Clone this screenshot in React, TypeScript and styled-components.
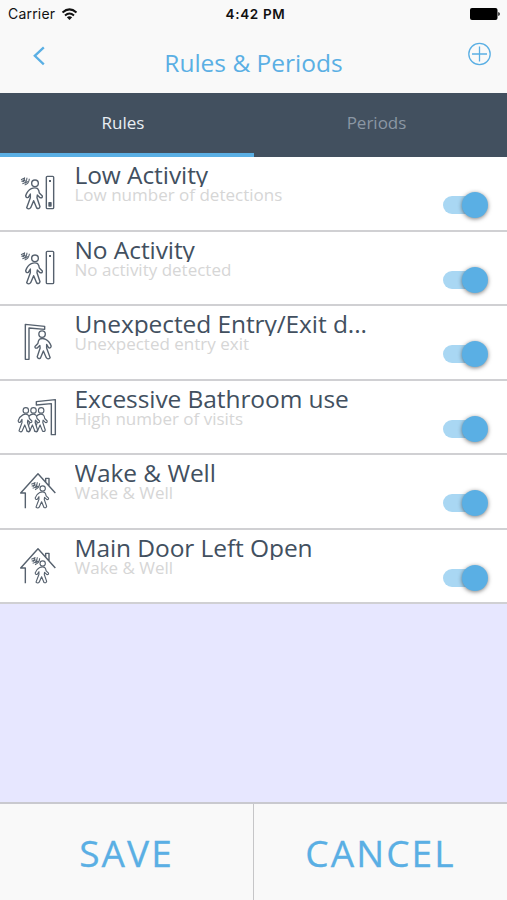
import React, { useState } from "react";
import styled, { createGlobalStyle } from "styled-components";

const BLUE = "#5aafe4";
const SLATE = "#42505f";

const GlobalStyle = createGlobalStyle`
  * { box-sizing: border-box; }
  body { margin: 0; font-family: "Open Sans", "Noto Sans", sans-serif; }
  button { border: 0; padding: 0; background: none; font: inherit; cursor: pointer; }
`;

const Screen = styled.div`
  width: 507px;
  height: 900px;
  display: flex;
  flex-direction: column;
  overflow: hidden;
  background: #e7e7ff;
`;

const StatusBar = styled.div`
  height: 28px;
  flex: none;
  display: grid;
  grid-template-columns: 1fr auto 1fr;
  align-items: center;
  padding: 0 7px 0 8px;
  background: #f9f9f9;
  color: #111;
  font-family: Inter, "Liberation Sans", sans-serif;
  font-size: 14px;
  line-height: 28px;
`;

const Carrier = styled.div`
  display: flex;
  align-items: center;
  gap: 6px;
  letter-spacing: 0.2px;
`;

const Clock = styled.div`
  padding-left: 3px;
  font-size: 13.5px;
  font-weight: 600;
  letter-spacing: 0.65px;
`;

const Battery = styled.svg`
  justify-self: end;
`;

const Header = styled.header`
  height: 65px;
  flex: none;
  display: grid;
  grid-template-columns: 80px 1fr 80px;
  background: #f9f9f9;
  color: ${BLUE};
`;

const IconButton = styled.button<{ $end?: boolean }>`
  display: flex;
  align-items: flex-start;
  justify-content: ${(p) => (p.$end ? "flex-end" : "flex-start")};
  padding: ${(p) => (p.$end ? "14px 15px 0 0" : "17px 0 0 31px")};
  color: inherit;
`;

const Heading = styled.h1`
  margin: 0;
  padding-top: 17px;
  text-align: center;
  font-size: 24.5px;
  line-height: 36px;
  font-weight: 400;
  white-space: nowrap;
`;

const Tabs = styled.nav`
  height: 64px;
  flex: none;
  display: grid;
  grid-template-columns: 254px 1fr;
  background: ${SLATE};
`;

const Tab = styled.button<{ $active: boolean }>`
  padding: 0 8px 1px 0;
  border-bottom: 4px solid ${(p) => (p.$active ? BLUE : SLATE)};
  color: ${(p) => (p.$active ? "#e9eef3" : "#8b97a4")};
  font-size: 17px;
`;

const List = styled.div`
  flex: 1;
`;

const Row = styled.div`
  height: 74.5px;
  display: grid;
  grid-template-columns: 74.5px 1fr 64px;
  border-bottom: 2px solid #d0d0d3;
  background: #fff;
`;

const RowIcon = styled.svg`
  margin: 8px 0 0 10px;
  fill: none;
  stroke: #56616e;
  stroke-width: 4.2;
  stroke-linejoin: round;
`;

const RowText = styled.div`
  min-width: 0;
`;

const Title = styled.div`
  height: 30px;
  overflow: hidden;
  color: ${SLATE};
  font-size: 24.5px;
  line-height: 35px;
  white-space: nowrap;
  letter-spacing: -0.08px;
`;

const Subtitle = styled.div`
  margin-top: -4px;
  color: #d6d6d6;
  font-size: 17px;
  line-height: 24px;
  white-space: nowrap;
`;

const Track = styled.button<{ $on: boolean }>`
  width: 41px;
  height: 18px;
  margin-top: 39px;
  display: flex;
  align-items: center;
  justify-content: ${(p) => (p.$on ? "flex-end" : "flex-start")};
  border-radius: 9px;
  background: ${(p) => (p.$on ? "#a9d7f3" : "#ccc")};
`;

const Knob = styled.span<{ $on: boolean }>`
  width: 26px;
  height: 26px;
  flex: none;
  margin-right: -4px;
  border-radius: 50%;
  background: ${(p) => (p.$on ? BLUE : "#f5f5f5")};
  box-shadow: 0 1px 4px rgba(0, 0, 0, 0.5);
`;

const Footer = styled.footer`
  height: 98px;
  flex: none;
  display: grid;
  grid-template-columns: 254px 1fr;
  border-top: 2px solid #c9c9cf;
  background: #f9f9f9;
`;

const Action = styled.button<{ $divided?: boolean }>`
  padding: ${(p) => (p.$divided ? "1px 0 0" : "1px 0 0")};
  border-right: ${(p) => (p.$divided ? "1.5px solid #c6c6c8" : "0")};
  color: ${BLUE};
  font-size: 37px;
  letter-spacing: 2.1px;
  -webkit-text-stroke: 0.3px ${BLUE};
`;

const Person = () => (
  <g fill="#fff">
    <path d="M64 71 Q75 66 83 71 Q87 75 88 84 L97 93 Q98 100 90 98 L82 90 L81 98 L90 125 Q88 133 80 129 L71 107 L62 128 Q57 135 50 128 L61 98 L61 87 L55 97 Q48 100 47 92 Q52 77 64 71 Z" />
    <circle cx="75" cy="55" r="10" />
  </g>
);

const Waves = () => (
  <path strokeWidth="3.2" d="M34 49 Q43 49 44 37 M37 56 Q50 54 51 38 M44 60 Q57 56 58 41 M33 44 L42 40 M38 51 L46 45 M45 55 L53 49" />
);

type IconKind = "low" | "none" | "entry" | "bathroom" | "house";

const drawings: Record<IconKind, React.ReactNode> = {
  low: (
    <>
      <Waves />
      <Person />
      <rect x="109" y="34" width="22" height="97" rx="3" />
      <path d="M117 48 H123" strokeWidth="6" />
      <rect x="117" y="113" width="6" height="10" fill="#4b5765" />
    </>
  ),
  none: (
    <>
      <Waves />
      <Person />
      <rect x="109" y="34" width="22" height="97" rx="3" />
      <path d="M117 48 H123" strokeWidth="6" />
    </>
  ),
  entry: (
    <g transform="translate(0 3)">
      <path d="M46 28 L104 34 V43 L57 39 V133 H46 Z" />
      <g transform="translate(169 4) scale(-0.97 0.97)">
        <Person />
      </g>
    </g>
  ),
  bathroom: (
    <g transform="translate(0 4)">
      <path d="M79 34 L136 28 V133 H124 V40 L79 44 Z" />
      {[32, 9, -14].map((x) => (
        <g key={x} transform={`translate(${x} 14) scale(0.82 0.84)`}>
          <Person />
        </g>
      ))}
    </g>
  ),
  house: (
    <g transform="translate(0 6)">
      <path d="M46 130 V84 H32 L84 26 L136 84 M107 51 V40 H117 V63" />
      <g transform="translate(31 14)">
        <Waves />
      </g>
      <g transform="translate(38 28) scale(0.8 0.77)">
        <Person />
      </g>
    </g>
  ),
};

const rules: { icon: IconKind; title: string; detail: string }[] = [
  { icon: "low", title: "Low Activity", detail: "Low number of detections" },
  { icon: "none", title: "No Activity", detail: "No activity detected" },
  { icon: "entry", title: "Unexpected Entry/Exit d...", detail: "Unexpected entry exit" },
  { icon: "bathroom", title: "Excessive Bathroom use", detail: "High number of visits" },
  { icon: "house", title: "Wake & Well", detail: "Wake & Well" },
  { icon: "house", title: "Main Door Left Open", detail: "Wake & Well" },
];

export default function App() {
  const [tab, setTab] = useState("Rules");
  const [enabled, setEnabled] = useState(rules.map(() => true));

  return (
    <Screen>
      <GlobalStyle />
      <StatusBar>
        <Carrier>
          Carrier
          <svg width="17" height="13" viewBox="0 0 17 13" fill="none" stroke="#111" strokeWidth="2">
            <path d="M1.5 4.4 Q8.5 -1.6 15.5 4.4 M4 7.4 Q8.5 3.6 13 7.4" />
            <path d="M5.8 9.3 Q8.5 7 11.2 9.3 L8.5 12 Z" fill="#111" stroke="none" />
          </svg>
        </Carrier>
        <Clock>4:42 PM</Clock>
        <Battery width="30" height="12" viewBox="0 0 30 12">
          <rect x="0" y="0" width="27.5" height="12" rx="2" />
          <path d="M28.3 4 Q29.8 4.3 29.8 6 T28.3 8 Z" />
        </Battery>
      </StatusBar>
      <Header>
        <IconButton aria-label="Back">
          <svg width="16" height="22" viewBox="0 0 16 22" fill="none" stroke="currentColor" strokeWidth="2.3">
            <path d="M12.8 2.3 L3.8 10.8 L12.8 19.3" />
          </svg>
        </IconButton>
        <Heading>Rules &amp; Periods</Heading>
        <IconButton $end aria-label="Add">
          <svg width="24" height="24" viewBox="0 0 24 24" fill="none" stroke="currentColor" strokeWidth="1.3">
            <circle cx="11.5" cy="12" r="10.7" />
            <path d="M11.5 4.5 V19.5 M4 12 H19" />
          </svg>
        </IconButton>
      </Header>
      <Tabs>
        {["Rules", "Periods"].map((name) => (
          <Tab key={name} $active={tab === name} onClick={() => setTab(name)}>
            {name}
          </Tab>
        ))}
      </Tabs>
      <List>
        {rules.map((rule, i) => (
          <Row key={rule.title}>
            <RowIcon width="60" height="60" viewBox="0 0 180 180">
              {drawings[rule.icon]}
            </RowIcon>
            <RowText>
              <Title>{rule.title}</Title>
              <Subtitle>{rule.detail}</Subtitle>
            </RowText>
            <Track
              $on={enabled[i]}
              role="switch"
              aria-checked={enabled[i]}
              aria-label={rule.title}
              onClick={() => setEnabled(enabled.map((v, n) => (n === i ? !v : v)))}
            >
              <Knob $on={enabled[i]} />
            </Track>
          </Row>
        ))}
      </List>
      <Footer>
        <Action $divided>SAVE</Action>
        <Action>CANCEL</Action>
      </Footer>
    </Screen>
  );
}
